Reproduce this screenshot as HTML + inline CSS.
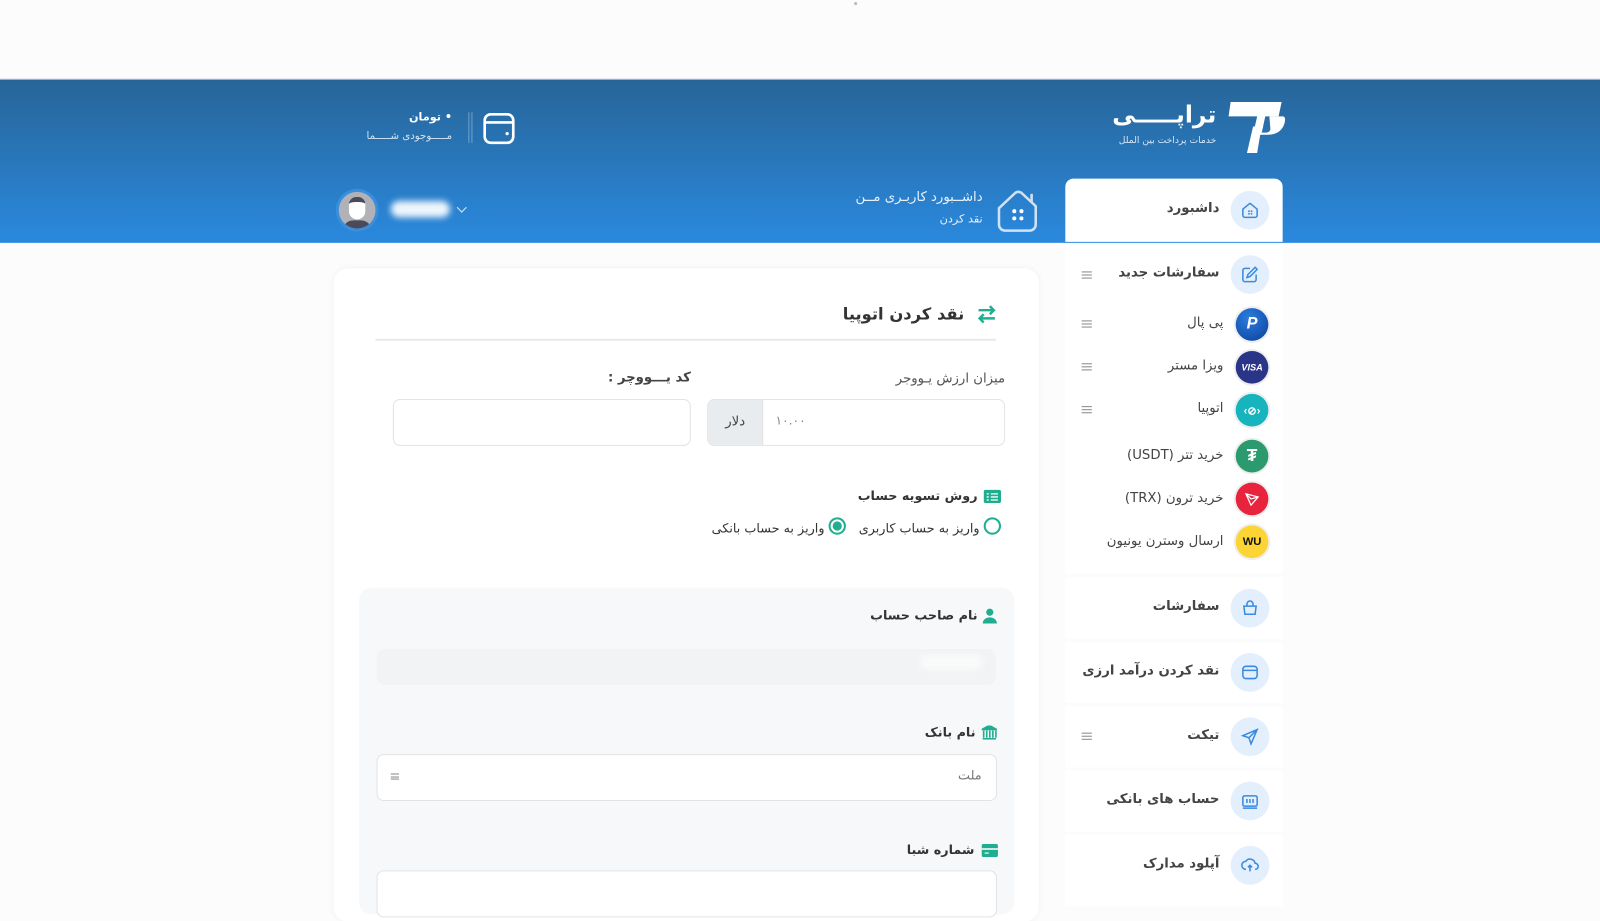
<!DOCTYPE html>
<html lang="fa" dir="rtl"><head><meta charset="utf-8">
<style>
*{box-sizing:border-box;margin:0;padding:0}
body{width:1600px;height:883px;overflow:hidden;background:#fcfcfd;font-family:"DejaVu Sans","Liberation Sans",sans-serif;color:#333;position:relative}
#w{position:absolute;left:0;top:0;width:1568px;height:866px;transform:scale(1.020408);transform-origin:0 0}
.abs{position:absolute;white-space:nowrap}
.hdr{position:absolute;left:0;top:77px;width:1568px;height:161px;background:linear-gradient(#276598,#2a89de);border-top:1px solid #c8d3de}
.side{position:absolute;left:1044px;width:213px;background:#fff}
.ic{position:absolute;right:13px;width:38px;height:38px;border-radius:50%;background:#e3effc;display:flex;align-items:center;justify-content:center}
.lbl{position:absolute;font-size:13px;font-weight:bold;color:#444;white-space:nowrap}
.ham{position:absolute;left:16px;width:10px;height:7px;border-top:1px solid #888;border-bottom:1px solid #888}
.ham:after{content:"";position:absolute;left:0;right:0;top:2px;border-top:1px solid #888}
.coin{position:absolute;right:14px;width:32px;height:32px;border-radius:50%;display:flex;align-items:center;justify-content:center;color:#fff;font-family:"Liberation Sans",sans-serif;font-weight:bold;box-shadow:0 0 0 2px #eee}
.sub{position:absolute;right:58px;font-size:13px;color:#444;white-space:nowrap}
.card{position:absolute;left:327px;top:263px;width:691px;height:640px;background:#fff;border-radius:14px;box-shadow:0 0 6px rgba(0,0,0,.05)}
.inp{position:absolute;border:1px solid #e3e3e3;border-radius:7px;background:#fff}
.h{position:absolute;font-size:12.5px;font-weight:bold;color:#333;white-space:nowrap}
</style></head><body><div id="w">
<div class="abs" style="left:837px;top:2px;width:3px;height:3px;border-radius:50%;background:#bbb"></div>
<div class="hdr"></div>

<svg class="abs" style="left:1200px;top:98px" width="60" height="54" viewBox="0 0 60 54"><path d="M6 2h50l-3 14H40l-4 18h-8l4-18H4z" fill="#fff"/><path d="M44 16h13c2 0 3 2 2 6-2 8-8 12-16 12h-8l-3 18h-10l6-26h10l-2 6h4c3 0 4-1 5-3z" fill="#fff"/></svg>
<div class="abs" style="right:376px;top:100px;font-size:23px;font-weight:bold;color:#fff">تراپـــــی</div>
<div class="abs" style="right:376px;top:133px;font-size:9px;color:#d6e6f6">خدمات پرداخت بین الملل</div>

<div class="abs" style="left:459px;top:110px;width:4px;height:30px;border-left:1px solid rgba(255,255,255,.35);border-right:1px solid rgba(255,255,255,.35)"></div>
<svg class="abs" style="left:472px;top:109px" width="34" height="34" viewBox="0 0 34 34"><rect x="3" y="3" width="28" height="28" rx="6" fill="none" stroke="#fff" stroke-width="2.6"/><path d="M3 11h28" stroke="#fff" stroke-width="2.6"/><circle cx="25" cy="22" r="1.6" fill="#fff"/></svg>
<div class="abs" style="right:1125px;top:108px;font-size:11px;font-weight:bold;color:#fff">• تومان</div>
<div class="abs" style="right:1125px;top:128px;font-size:10px;color:#d5e4f3">مـــــوجودی شـــــما</div>

<div class="abs" style="left:329px;top:185px;width:42px;height:42px;border-radius:50%;background:#3a8fdc;padding:3px"><div style="width:36px;height:36px;border-radius:50%;background:#b0b2b8;overflow:hidden;position:relative"><div style="position:absolute;left:10px;top:5px;width:16px;height:22px;border-radius:8px 8px 9px 9px;background:#fff;border-top:5px solid #4a4a5a"></div><div style="position:absolute;left:4px;top:28px;width:28px;height:12px;border-radius:10px 10px 0 0;background:#4a4a5a"></div></div></div>
<div class="abs" style="left:383px;top:197px;width:58px;height:16px;border-radius:8px;background:#eef5fc;filter:blur(3px)"></div>
<div class="abs" style="left:449px;top:200px;width:7px;height:7px;border-right:1.5px solid #dce9f6;border-bottom:1.5px solid #dce9f6;transform:rotate(45deg)"></div>

<svg class="abs" style="left:975px;top:184px" width="46" height="46" viewBox="0 0 46 46"><path d="M4 20L20 5q3-2 6 0l14 13v18a6 6 0 0 1-6 6H10a6 6 0 0 1-6-6z" fill="none" stroke="#cfe2f5" stroke-width="2.5"/><path d="M36 6v8" stroke="#cfe2f5" stroke-width="2.5"/><circle cx="19" cy="23" r="2" fill="#fff"/><circle cx="26" cy="23" r="2" fill="#fff"/><circle cx="19" cy="30" r="2" fill="#fff"/><circle cx="26" cy="30" r="2" fill="#fff"/></svg>
<div class="abs" style="right:605px;top:186px;font-size:13px;color:#e6f0fa">داشــبورد کاربـری مــن</div>
<div class="abs" style="right:605px;top:208px;font-size:11px;color:#e6f0fa">نقد کردن</div>

<div class="side" style="top:175px;height:62px;border-radius:8px 8px 0 0">
 <div class="ic" style="top:12px"><svg width="18" height="18" viewBox="0 0 18 18"><path d="M2 8l6-5q1-1 2 0l6 5v6a2 2 0 0 1-2 2H4a2 2 0 0 1-2-2z" fill="none" stroke="#3a8ae0" stroke-width="1.5"/><circle cx="8" cy="10" r=".9" fill="#3a8ae0"/><circle cx="10.5" cy="10" r=".9" fill="#3a8ae0"/><circle cx="8" cy="12.5" r=".9" fill="#3a8ae0"/><circle cx="10.5" cy="12.5" r=".9" fill="#3a8ae0"/></svg></div>
 <div class="lbl" style="right:62px;top:22px">داشبورد</div>
</div>
<div class="side" style="top:240px;height:322px">
 <div class="ic" style="top:10px"><svg width="18" height="18" viewBox="0 0 18 18"><path d="M9 3H4a2 2 0 0 0-2 2v9a2 2 0 0 0 2 2h9a2 2 0 0 0 2-2V9" fill="none" stroke="#3a8ae0" stroke-width="1.5"/><path d="M14 2l2 2-7 7-3 1 1-3z" fill="none" stroke="#3a8ae0" stroke-width="1.5"/></svg></div>
 <div class="lbl" style="right:62px;top:20px">سفارشات جدید</div><div class="ham" style="top:26px"></div>
 <div class="coin" style="top:62px;background:radial-gradient(circle at 40% 30%,#2b7de0,#0b3f9a)"><span style="font-size:16px;font-style:italic">P</span></div>
 <div class="sub" style="top:69px">پی پال</div><div class="ham" style="top:74px"></div>
 <div class="coin" style="top:104px;background:#2a3587;font-size:9px;font-style:italic">VISA</div>
 <div class="sub" style="top:111px">ویزا مستر</div><div class="ham" style="top:116px"></div>
 <div class="coin" style="top:146px;background:#16b4bc;font-size:11px">‹⊘›</div>
 <div class="sub" style="top:153px">اتوپیا</div><div class="ham" style="top:158px"></div>
 <div class="coin" style="top:191px;background:#2b9a6e;font-size:17px">₮</div>
 <div class="sub" style="top:199px">خرید تتر (USDT)</div>
 <div class="coin" style="top:233px;background:#e8233e"><svg width="16" height="16" viewBox="0 0 16 16"><path d="M2 3l12 3-7 8z M2 3l5 11 M14 6L7 8 2 3" fill="none" stroke="#fff" stroke-width="1.2"/></svg></div>
 <div class="sub" style="top:241px">خرید ترون (TRX)</div>
 <div class="coin" style="top:275px;background:#fcd535;color:#111;font-size:11px">WU</div>
 <div class="sub" style="top:283px">ارسال وسترن یونیون</div>
</div>
<div class="side" style="top:566px;height:60px"><div class="ic" style="top:11px"><svg width="18" height="18"><path d="M3 7h12l-1 8H4z M6 7V5a3 3 0 0 1 6 0v2" fill="none" stroke="#3a8ae0" stroke-width="1.5"/></svg></div><div class="lbl" style="right:62px;top:21px">سفارشات</div></div>
<div class="side" style="top:629px;height:60px"><div class="ic" style="top:11px"><svg width="18" height="18"><rect x="2" y="3" width="14" height="12" rx="3" fill="none" stroke="#3a8ae0" stroke-width="1.5"/><path d="M2 7h14" stroke="#3a8ae0" stroke-width="1.5"/></svg></div><div class="lbl" style="right:62px;top:21px">نقد کردن درآمد ارزی</div></div>
<div class="side" style="top:692px;height:60px"><div class="ic" style="top:11px"><svg width="18" height="18"><path d="M16 2L2 8l6 2 2 6z M8 10l8-8" fill="none" stroke="#3a8ae0" stroke-width="1.5"/></svg></div><div class="lbl" style="right:62px;top:21px">تیکت</div><div class="ham" style="top:26px"></div></div>
<div class="side" style="top:755px;height:60px"><div class="ic" style="top:11px"><svg width="18" height="18"><rect x="2" y="4" width="14" height="10" rx="1.5" fill="none" stroke="#3a8ae0" stroke-width="1.5"/><path d="M2 16h14 M6 7v4 M9 7v4 M12 7v4" stroke="#3a8ae0" stroke-width="1.5"/></svg></div><div class="lbl" style="right:62px;top:21px">حساب های بانکی</div></div>
<div class="side" style="top:818px;height:70px"><div class="ic" style="top:11px"><svg width="18" height="18"><path d="M5 13a4 4 0 0 1 0-8 5 5 0 0 1 9 2 3 3 0 0 1 0 6 M9 15V9 M7 11l2-2 2 2" fill="none" stroke="#3a8ae0" stroke-width="1.5"/></svg></div><div class="lbl" style="right:62px;top:21px">آپلود مدارک</div></div>

<div class="card"></div>
<svg class="abs" style="left:957px;top:299px" width="20" height="18" viewBox="0 0 20 18"><path d="M2 5h15M13 1l4 4-4 4M18 13H3M7 9l-4 4 4 4" fill="none" stroke="#1fae8f" stroke-width="2.4"/></svg>
<div class="abs" style="right:623px;top:298px;font-size:16px;font-weight:bold;color:#333">نقد کردن اتوپیا</div>
<div class="abs" style="left:368px;top:332px;width:608px;height:2px;background:#e9e9e9"></div>

<div class="abs" style="right:583px;top:364px;font-size:13px;color:#555">میزان ارزش یـووجر</div>
<div class="abs" style="right:891px;top:363px;font-size:13px;font-weight:bold;color:#444">کد یـــووچر :</div>
<div class="inp" style="left:693px;top:391px;width:292px;height:46px"></div>
<div class="abs" style="left:694px;top:392px;width:54px;height:44px;background:#e9ecef;border-right:1px solid #ddd;border-radius:6px 0 0 6px;font-size:13px;color:#444;text-align:center;line-height:44px">دلار</div>
<div class="abs" style="left:760px;top:405px;font-size:12px;color:#888">۱۰.۰۰</div>
<div class="inp" style="left:385px;top:391px;width:292px;height:46px"></div>

<svg class="abs" style="left:964px;top:480px" width="17" height="13"><rect x="0" y="0" width="17" height="13" rx="2" fill="#1fae8f"/><path d="M3 4h2M3 7h2M3 10h2M7 4h7M7 7h7M7 10h7" stroke="#fff" stroke-width="1.3"/></svg>
<div class="h" style="right:610px;top:478px">روش تسویه حساب</div>
<div class="abs" style="left:964px;top:507px;width:17px;height:17px;border:2px solid #1fae8f;border-radius:50%"></div>
<div class="abs" style="right:608px;top:510px;font-size:12.5px;color:#333">واریز به حساب کاربری</div>
<div class="abs" style="left:812px;top:507px;width:17px;height:17px;border:2px solid #1fae8f;border-radius:50%"><div style="margin:2px;width:9px;height:9px;border-radius:50%;background:#1fae8f"></div></div>
<div class="abs" style="right:760px;top:510px;font-size:12.5px;color:#333">واریز به حساب بانکی</div>

<div class="abs" style="left:352px;top:576px;width:642px;height:320px;background:#f7f8fa;border-radius:12px"></div>
<svg class="abs" style="left:963px;top:596px" width="14" height="15"><circle cx="7" cy="4" r="3.5" fill="#1fae8f"/><path d="M0 15a7 6 0 0 1 14 0z" fill="#1fae8f"/></svg>
<div class="h" style="right:610px;top:595px">نام صاحب حساب</div>
<div class="abs" style="left:369px;top:636px;width:607px;height:35px;background:#f2f3f4;border-radius:8px"></div>
<div class="abs" style="left:902px;top:642px;width:60px;height:14px;background:#fafafa;filter:blur(3px)"></div>
<svg class="abs" style="left:962px;top:711px" width="15" height="14"><path d="M0 4L7.5 0 15 4z M1 13h13 M2 5v7M5 5v7M8 5v7M11 5v7M14 5v7" stroke="#1fae8f" fill="#1fae8f" stroke-width="1.6"/></svg>
<div class="h" style="right:612px;top:710px">نام بانک</div>
<div class="inp" style="left:369px;top:739px;width:608px;height:46px"></div>
<div class="abs" style="right:606px;top:752px;font-size:12.5px;color:#777">ملت</div>
<div class="ham" style="left:383px;top:758px;width:8px;height:6px"></div>
<svg class="abs" style="left:962px;top:827px" width="16" height="13"><rect width="16" height="13" rx="2" fill="#1fae8f"/><path d="M0 5h16" stroke="#fff" stroke-width="1.5"/><path d="M3 9h4" stroke="#fff"/></svg>
<div class="h" style="right:613px;top:825px">شماره شبا</div>
<div class="inp" style="left:369px;top:853px;width:608px;height:46px"></div>
</div></body></html>
